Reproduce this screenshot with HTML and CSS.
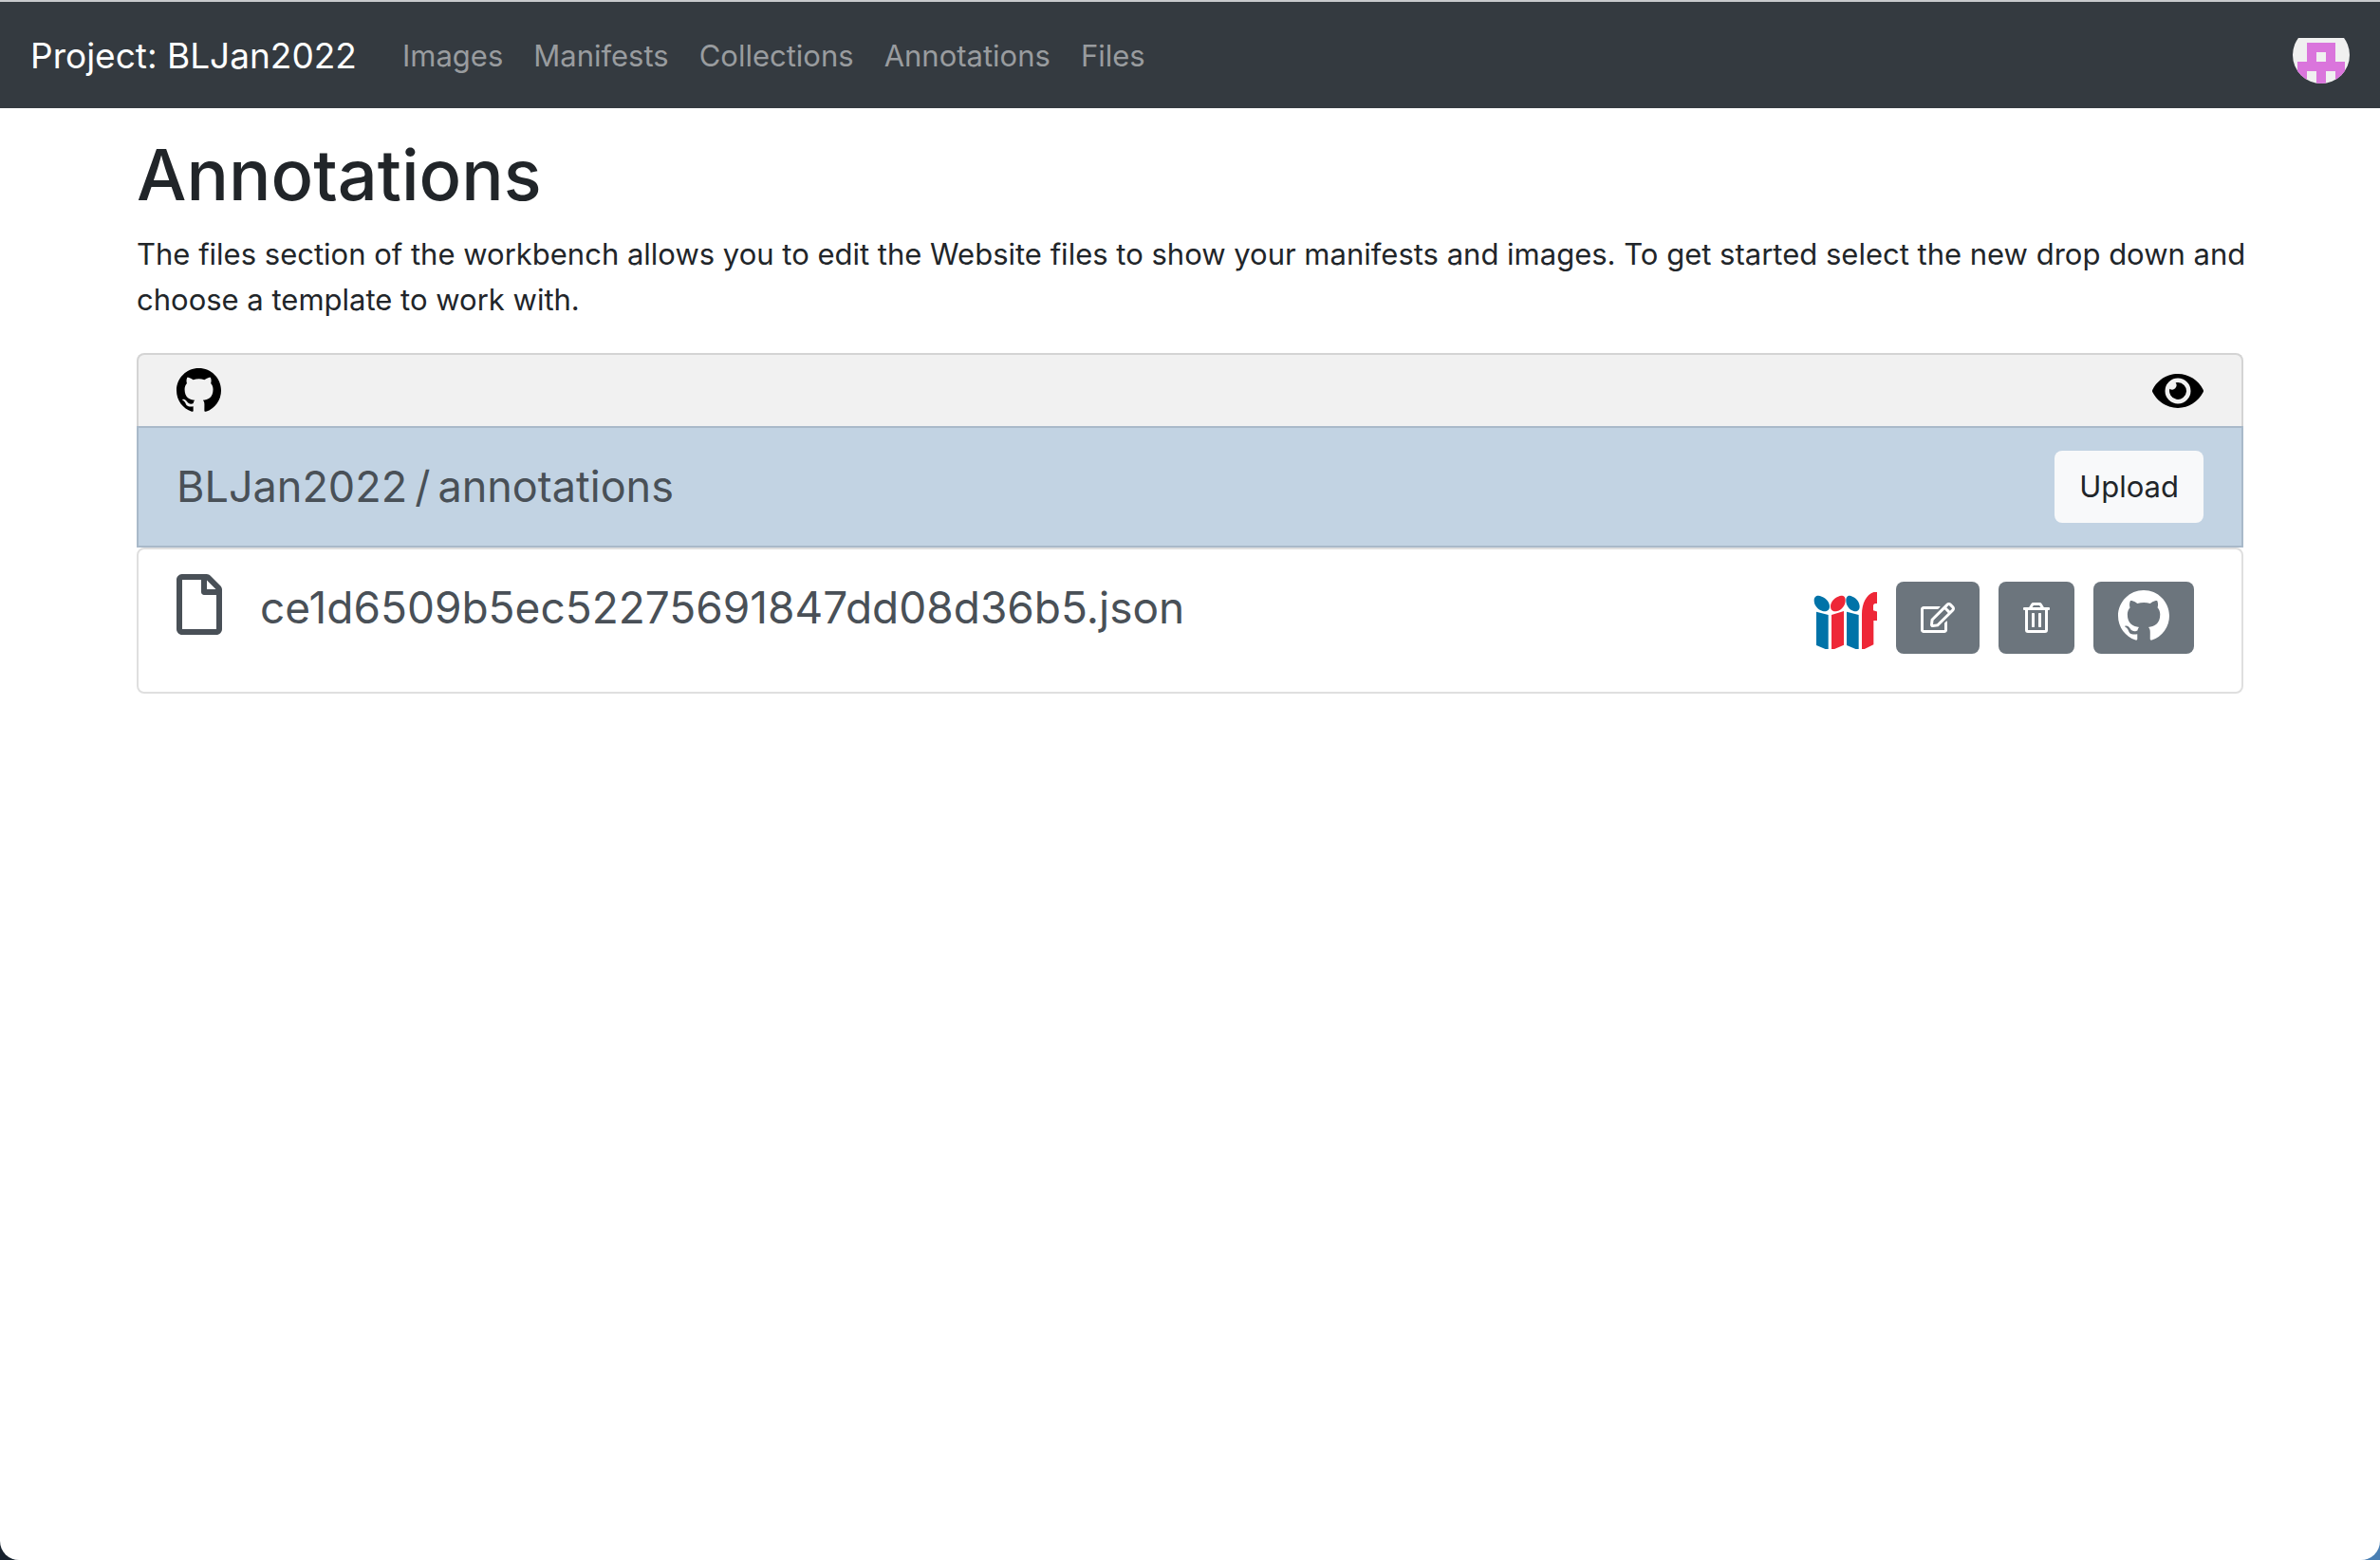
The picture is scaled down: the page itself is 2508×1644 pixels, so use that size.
FILE: index.html
```html
<!DOCTYPE html>
<html lang="en">
<head>
<meta charset="utf-8">
<meta name="viewport" content="width=device-width, initial-scale=1">
<title>Annotations</title>
<link rel="stylesheet" href="styles.css">
</head>
<body>
<svg class="defs" aria-hidden="true">
  <symbol id="github" viewBox="0 0 16 16"><path d="M8 0C3.58 0 0 3.58 0 8c0 3.54 2.29 6.53 5.47 7.59.4.07.55-.17.55-.38 0-.19-.01-.82-.01-1.49-2.01.37-2.53-.49-2.69-.94-.09-.23-.48-.94-.82-1.13-.28-.15-.68-.52-.01-.53.63-.01 1.08.58 1.23.82.72 1.21 1.87.87 2.33.66.07-.52.28-.87.51-1.07-1.78-.2-3.64-.89-3.64-3.95 0-.87.31-1.59.82-2.15-.08-.2-.36-1.02.08-2.12 0 0 .67-.21 2.2.82.64-.18 1.32-.27 2-.27s1.36.09 2 .27c1.53-1.04 2.2-.82 2.2-.82.44 1.1.16 1.92.08 2.12.51.56.82 1.27.82 2.15 0 3.07-1.87 3.75-3.65 3.95.29.25.54.73.54 1.48 0 1.07-.01 1.93-.01 2.2 0 .21.15.46.55.38A8.01 8.01 0 0 0 16 8c0-4.42-3.58-8-8-8z"/></symbol>
</svg>
<nav class="navbar">
  <a class="brand" href="#">Project: BLJan2022</a>
  <ul class="nav-links">
    <li><a href="#">Images</a></li>
    <li><a href="#">Manifests</a></li>
    <li><a href="#">Collections</a></li>
    <li><a href="#">Annotations</a></li>
    <li><a href="#">Files</a></li>
  </ul>
  <a class="avatar" href="#" aria-label="Account">
    <svg viewBox="0 0 60 48" width="60" height="48">
      <clipPath id="round"><circle cx="30" cy="18" r="30"/></clipPath>
      <g clip-path="url(#round)">
        <path fill="#f0f0f0" d="M0 0h60v48H0z"/>
        <path fill="#da75dc" d="M15 5h30v20h10v23H45V35H35v13H25V35H15v13H5V25h10zM25 15v10h10V15z"/>
      </g>
    </svg>
  </a>
</nav>
<main class="container">
  <h1>Annotations</h1>
  <p class="intro">The files section of the workbench allows you to edit the Website files to show your manifests and images. To get started select the new drop down and choose a template to work with.</p>
  <section class="listing">
    <div class="toolbar">
      <a href="#" aria-label="View on GitHub"><svg width="47" height="47"><use href="#github"/></svg></a>
      <a href="#" aria-label="Preview"><svg width="54" height="48" viewBox="0 0 576 512"><path d="M572.52 241.4C518.29 135.59 410.93 64 288 64S57.68 135.64 3.48 241.41a32.35 32.35 0 0 0 0 29.19C57.71 376.41 165.07 448 288 448s230.32-71.64 284.52-177.41a32.35 32.35 0 0 0 0-29.19zM288 400a144 144 0 1 1 144-144 143.93 143.93 0 0 1-144 144zm0-240a95.31 95.31 0 0 0-25.31 3.79 47.85 47.85 0 0 1-66.9 66.9A95.78 95.78 0 1 0 288 160z"/></svg></a>
    </div>
    <div class="path">
      <div class="breadcrumb">
        <span>BLJan2022</span>
        <span>/</span>
        <span>annotations</span>
      </div>
      <button class="btn btn-light" type="button">Upload</button>
    </div>
    <div class="file">
      <a class="file-name" href="#">
        <svg width="48" height="64" viewBox="0 0 384 512"><path d="M369.9 97.9L286 14C277 5 264.8-.1 252.1-.1H48C21.5 0 0 21.5 0 48v416c0 26.5 21.5 48 48 48h288c26.5 0 48-21.5 48-48V131.9c0-12.7-5.1-25-14.1-34zM332.1 128H256V51.9l76.1 76.1zM48 464V48h160v104c0 13.3 10.7 24 24 24h104v288H48z"/></svg>
        <span>ce1d6509b5ec52275691847dd08d36b5.json</span>
      </a>
      <div class="actions">
        <a class="iiif" href="#" aria-label="IIIF">
          <svg width="67" height="60" viewBox="153 192 201 180">
            <g fill="#0073a8">
              <path d="M162 254l38 10v112l-38-16zM258 254l38 10v112l-38-16z"/>
              <path d="M155 219c0-16 12-18 24-13 15 6 25 18 25 31 0 14-11 18-22 15-15-4-27-18-27-33zM256 219c0-16 10-18 20-13 14 6 23 18 23 31 0 14-9 18-19 15-14-4-24-18-24-33z"/>
            </g>
            <g fill="#ee2737">
              <path d="M210 264l39-12v107l-39 17z"/>
              <path d="M254 218c0-15-12-17-23-12-14 6-24 18-24 31 0 14 10 18 21 15 15-4 26-19 26-34z"/>
              <path d="M306 376V262c0-40 20-72 50-72v38h-7c-4 0-7 3-7 8v14l14 4v28h-13v76z"/>
            </g>
          </svg>
        </a>
        <button class="btn btn-secondary" type="button" aria-label="Edit"><svg width="36" height="32" viewBox="0 0 576 512"><path d="M402.3 344.9l32-32c5-5 13.7-1.5 13.7 5.7V464c0 26.5-21.5 48-48 48H48c-26.5 0-48-21.5-48-48V112c0-26.5 21.5-48 48-48h273.5c7.1 0 10.7 8.6 5.7 13.7l-32 32c-1.5 1.5-3.5 2.3-5.7 2.3H48v352h352V350.5c0-2.1.8-4.1 2.3-5.6zm156.6-201.8L296.3 405.7l-90.4 10c-26.2 2.9-48.5-19.2-45.6-45.6l10-90.4L432.9 17.1c22.9-22.9 59.9-22.9 82.7 0l43.2 43.2c22.9 22.9 22.9 60 .1 82.8zM460.1 174L402 115.9 216.2 301.8l-7.3 65.3 65.3-7.3L460.1 174zm64.8-79.7l-43.2-43.2c-4.1-4.1-10.8-4.1-14.8 0L436 82l58.1 58.1 30.9-30.9c4-4.2 4-10.8-.1-14.9z"/></svg></button>
        <button class="btn btn-secondary" type="button" aria-label="Delete"><svg width="28" height="32" viewBox="0 0 448 512"><path d="M268 416h24a12 12 0 0 0 12-12V188a12 12 0 0 0-12-12h-24a12 12 0 0 0-12 12v216a12 12 0 0 0 12 12zM432 80h-82.41l-34-56.7A48 48 0 0 0 274.41 0H173.59a48 48 0 0 0-41.16 23.3L98.41 80H16A16 16 0 0 0 0 96v16a16 16 0 0 0 16 16h16v336a48 48 0 0 0 48 48h288a48 48 0 0 0 48-48V128h16a16 16 0 0 0 16-16V96a16 16 0 0 0-16-16zM171.84 50.91A6 6 0 0 1 177 48h94a6 6 0 0 1 5.15 2.91L293.61 80H154.39zM368 464H80V128h288zm-212-48h24a12 12 0 0 0 12-12V188a12 12 0 0 0-12-12h-24a12 12 0 0 0-12 12v216a12 12 0 0 0 12 12z"/></svg></button>
        <button class="btn btn-secondary" type="button" aria-label="Open on GitHub"><svg class="mark" width="54" height="54"><use href="#github"/></svg></button>
      </div>
    </div>
  </section>
</main>
</body>
</html>
```
FILE: styles.css
```css
* { box-sizing: border-box; }

html { background: linear-gradient(90deg, #17222e 50%, #4a7fb3 50%); }

body {
  margin: 0;
  min-height: 100vh;
  border-top: 2px solid #c8cacd;
  border-radius: 0 0 20px 20px;
  background: #fff;
  color: #212529;
  font-family: Inter, "Liberation Sans", sans-serif;
  font-size: 31px;
  line-height: 48px;
}

a { color: inherit; text-decoration: none; }
svg { display: block; fill: currentColor; }
.defs { display: none; }

.navbar {
  display: flex;
  align-items: center;
  gap: 48px;
  min-height: 112px;
  padding: 2px 32px 0;
  background: #343a40;
}
.brand { color: #fff; font-size: 37px; }
.nav-links {
  display: flex;
  gap: 32px;
  margin: 0;
  padding: 0;
  list-style: none;
  color: #999c9f;
}
.avatar { margin-left: auto; padding-top: 10px; }

.container {
  max-width: 2280px;
  margin: 0 auto;
  padding: 22px 30px;
}
h1 {
  margin: 0 0 12px;
  font-size: 74px;
  font-weight: 500;
  line-height: 96px;
}
/* The paragraph may run slightly into the right gutter. */
.intro { margin: 0 -16px 32px 0; }

.toolbar,
.path,
.file {
  display: flex;
  justify-content: space-between;
  padding: 0 40px;
  border: 2px solid #dfdfdf;
}
.toolbar {
  align-items: center;
  height: 77px;
  border-color: #d4d4d4;
  border-bottom: 0;
  border-radius: 8px 8px 0 0;
  background: #f1f1f1;
  color: #000;
}
.path {
  align-items: center;
  padding-block: 24px;
  border-color: #a9b9c9;
  background: #c2d3e3;
  color: #495057;
}
.breadcrumb {
  display: flex;
  gap: 8px;
  font-size: 45px;
}
.file {
  align-items: flex-start;
  padding-block: 26px 40px;
  border-radius: 8px;
  color: #495057;
}
.file-name {
  display: flex;
  align-items: center;
  gap: 40px;
  font-size: 46px;
}
.file-name span { padding-top: 6px; }
.actions {
  display: flex;
  align-items: center;
  gap: 20px;
  padding: 8px 10px 0 0;
}
.iiif { padding-top: 6px; }

.btn {
  display: flex;
  align-items: center;
  justify-content: center;
  height: 76px;
  padding: 0 26px;
  border: 0;
  border-radius: 8px;
  font: inherit;
}
.btn-light { background: #f8f9fa; color: #212529; }
.btn-secondary { background: #6c757d; color: #fff; }
.mark { margin-bottom: 4px; }
```
